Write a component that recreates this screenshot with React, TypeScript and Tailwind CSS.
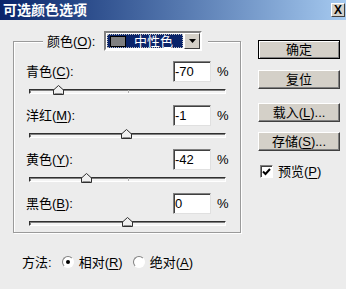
import React from "react";

const rows = [
  { label: "青色", key: "C", value: -70 },
  { label: "洋红", key: "M", value: -1 },
  { label: "黄色", key: "Y", value: -42 },
  { label: "黑色", key: "B", value: 0 },
];

const font = "font-['Liberation_Sans','Noto_Sans_CJK_SC',sans-serif]";

function Slider({ value }: { value: number }) {
  const pct = (value + 100) / 200;
  return (
    <div className="relative ml-[3px] mr-[1px] h-[5px] border border-[#303030] border-b-[#ffffff] border-r-[#ffffff] bg-[#f4f4f4] shadow-[inset_1px_1px_0_#808080]">
      <div className="absolute left-1/2 top-0 h-[3px] w-px bg-[#b0b0b0]" />
      <svg
        className="absolute top-[-5px]"
        style={{ left: `calc(${pct * 100}% - 6px)` }}
        width="11"
        height="10"
        viewBox="0 0 11 10"
      >
        <path d="M5.5 0.5 L10.5 5 L10.5 9.5 L0.5 9.5 L0.5 5 Z" fill="#f0f0f0" stroke="#303030" />
        <path d="M1.5 8.5 L9.5 8.5" stroke="#909090" />
      </svg>
    </div>
  );
}

function Mn({ children }: { children: React.ReactNode }) {
  return <span className="underline underline-offset-2">{children}</span>;
}

function Button({ children, def }: { children: React.ReactNode; def?: boolean }) {
  return (
    <div
      className={`flex h-[19px] w-[82px] items-center justify-center bg-[#d4d0c8] text-[13px] text-black ${
        def
          ? "border border-black shadow-[inset_1px_1px_0_#fff,inset_-1px_-1px_0_#808080]"
          : "border border-[#ffffff] border-b-[#404040] border-r-[#404040] shadow-[inset_-1px_-1px_0_#808080]"
      }`}
    >
      {children}
    </div>
  );
}

export default function App() {
  return (
    <div className={`h-[289px] w-[346px] overflow-hidden bg-[#ececec] ${font} text-[13px] leading-none text-black`}>
      {/* title bar */}
      <div className="flex h-[20px] items-center justify-between bg-gradient-to-r from-[#0a246a] to-[#a6caf0] pl-[3px] pr-px">
        <span className="text-[14px] font-bold text-white">可选颜色选项</span>
        <div className="flex h-[14px] w-[14px] items-center justify-center border border-[#ffffff] border-b-[#404040] border-r-[#404040] bg-[#d4d0c8] text-[12px] font-bold">
          X
        </div>
      </div>

      <div className="flex">
        {/* left column */}
        <div className="w-[241px] pl-[13px]">
          <fieldset className="mt-[11px] w-[228px] border border-[#9a9a9a] pb-[6px] pl-[12px] pr-[13px] shadow-[inset_1px_1px_0_#fff,1px_1px_0_#fff]">
            <legend className="relative z-10 ml-[17px] block bg-[#ececec] pl-[4px] pr-[6px]">
              <div className="flex h-[20px] items-center">
                <span className="w-[57px]">
                  颜色(<Mn>O</Mn>):
                </span>
                <div className="flex h-[20px] w-[98px] items-stretch border-2 border-[#808080] border-b-[#ffffff] border-r-[#ffffff] bg-white">
                  <div className="m-px flex flex-1 items-center gap-[8px] border border-dotted border-[#c0c0c0] bg-[#0a246a] pl-[2px]">
                    <div className="h-[11px] w-[16px] shrink-0 border border-black bg-[#808080]" />
                    <span className="whitespace-nowrap text-white">中性色</span>
                  </div>
                  <div className="flex w-[16px] items-center justify-center border border-[#ffffff] border-b-[#404040] border-r-[#404040] bg-[#d4d0c8]">
                    <svg width="7" height="4" viewBox="0 0 7 4">
                      <path d="M0 0 H7 L3.5 4 Z" fill="#000" />
                    </svg>
                  </div>
                </div>
              </div>
            </legend>

            <div className="mt-[10px] flex flex-col gap-[11px]">
              {rows.map((r) => (
                <div key={r.key}>
                  <div className="flex h-[21px] items-center">
                    <span className="flex-1">
                      {r.label}(<Mn>{r.key}</Mn>):
                    </span>
                    <div className="flex h-[21px] w-[38px] items-center border border-[#808080] border-b-[#e0e0e0] border-r-[#e0e0e0] bg-white pl-px shadow-[inset_1px_1px_0_#404040]">
                      {r.value}
                    </div>
                    <span className="ml-[6px] w-[10px]">%</span>
                  </div>
                  <div className="mt-[7px]">
                    <Slider value={r.value} />
                  </div>
                </div>
              ))}
            </div>
          </fieldset>

          <div className="mt-[21px] flex h-[16px] items-center pl-[9px]">
            <span>方法:</span>
            <div className="ml-[10px] flex h-[12px] w-[12px] items-center justify-center rounded-full border border-[#808080] border-b-[#ffffff] border-r-[#ffffff] bg-white">
              <div className="h-[4px] w-[4px] rounded-full bg-black" />
            </div>
            <span className="ml-[5px]">
              相对(<Mn>R</Mn>)
            </span>
            <div className="ml-[10px] h-[12px] w-[12px] rounded-full border border-[#808080] border-b-[#ffffff] border-r-[#ffffff] bg-white" />
            <span className="ml-[5px]">
              绝对(<Mn>A</Mn>)
            </span>
          </div>
        </div>

        {/* right column */}
        <div className="ml-[17px] flex flex-col">
          <div className="mt-[20px]">
            <Button def>确定</Button>
          </div>
          <div className="mt-[11px]">
            <Button>复位</Button>
          </div>
          <div className="mt-[14px]">
            <Button>
              载入(<Mn>L</Mn>)...
            </Button>
          </div>
          <div className="mt-[10px]">
            <Button>
              存储(<Mn>S</Mn>)...
            </Button>
          </div>
          <div className="ml-[2px] mt-[14px] flex items-center">
            <div className="flex h-[13px] w-[13px] items-center justify-center border border-[#808080] border-b-[#ffffff] border-r-[#ffffff] bg-white shadow-[inset_1px_1px_0_#404040]">
              <svg width="9" height="8" viewBox="0 0 9 8">
                <path d="M1 3.5 L3.5 6 L8 1" stroke="#000" strokeWidth="2" fill="none" />
              </svg>
            </div>
            <span className="ml-[5px]">
              预览(<Mn>P</Mn>)
            </span>
          </div>
        </div>
      </div>
    </div>
  );
}
